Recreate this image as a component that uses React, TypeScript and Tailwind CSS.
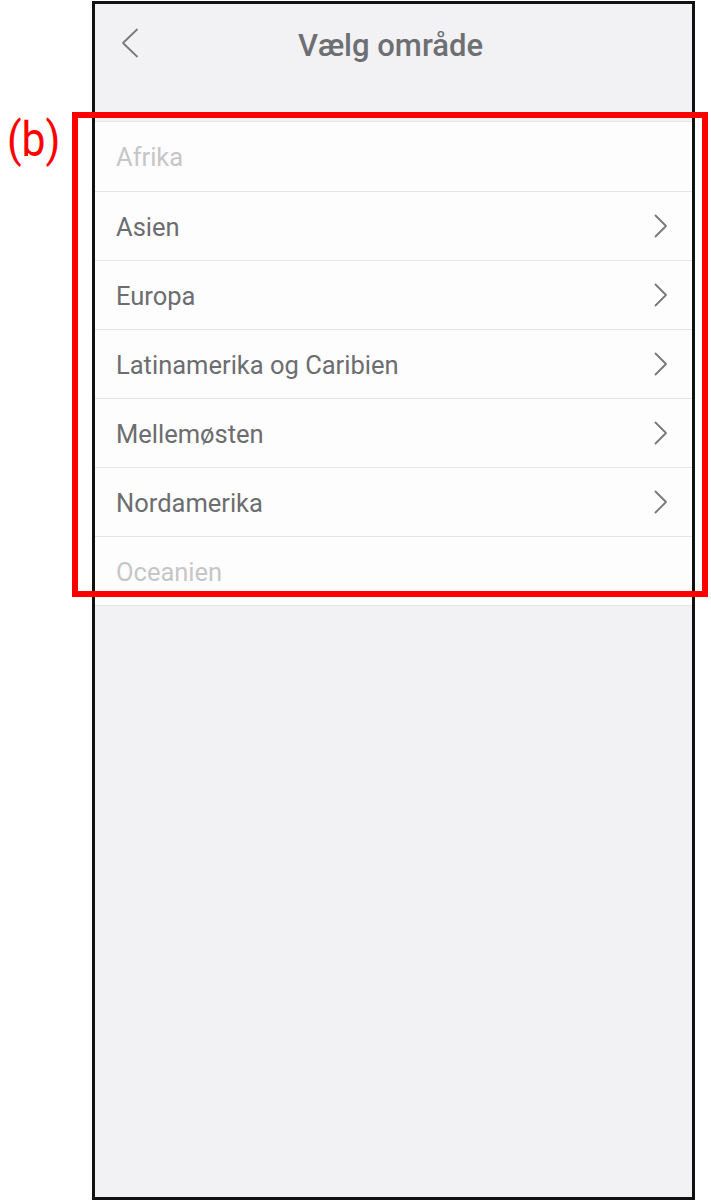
const REGIONS = [
  { name: "Afrika", enabled: false },
  { name: "Asien", enabled: true },
  { name: "Europa", enabled: true },
  { name: "Latinamerika og Caribien", enabled: true },
  { name: "Mellemøsten", enabled: true },
  { name: "Nordamerika", enabled: true },
  { name: "Oceanien", enabled: false },
];

const ChevronRight = () => (
  <svg width="14" height="24" viewBox="0 0 14 24" fill="none" className="shrink-0">
    <path d="M1.5 1.5 L12 12 L1.5 22.5" stroke="#77787b" strokeWidth="1.8" strokeLinecap="round" strokeLinejoin="round" />
  </svg>
);

const ChevronLeft = () => (
  <svg width="18" height="30" viewBox="0 0 18 30" fill="none">
    <path d="M16 1.5 L2 15 L16 28.5" stroke="#77787b" strokeWidth="1.8" strokeLinecap="round" strokeLinejoin="round" />
  </svg>
);

export default function App() {
  return (
    <div className="relative min-h-[1202px] w-[711px] bg-white font-['Roboto',sans-serif]">
      <div className="ml-[92px] pt-[1px]">
        <div className="flex h-[1199px] w-[603px] flex-col border-[3px] border-[#111] bg-[#f2f2f4]">
          <header className="relative flex h-[84px] shrink-0 items-center justify-center">
            <div className="absolute left-[26px] top-[24px]">
              <ChevronLeft />
            </div>
            <h1 className="-ml-[6px] text-[31px] font-medium text-[#6e6f72]">Vælg område</h1>
          </header>

          <ul className="mt-[33px] border-y border-[#e6e6e8] bg-[#fdfdfd]">
            {REGIONS.map((r, i) => (
              <li
                key={r.name}
                className={
                  "flex h-[69px] items-center justify-between pl-[21px] pr-[24px] " +
                  (i > 0 ? "border-t border-[#e4e4e6]" : "")
                }
              >
                <span className={"pt-[2px] text-[25.5px] " + (r.enabled ? "text-[#6c6d70]" : "text-[#c6c6c8]")}>
                  {r.name}
                </span>
                {r.enabled && <ChevronRight />}
              </li>
            ))}
          </ul>
        </div>
      </div>

      {/* annotation overlay */}
      <div className="pointer-events-none absolute left-[72px] top-[112px] h-[485px] w-[636px] border-[6px] border-[#ff0000]" />
      <span className="absolute left-[7px] top-[116px] origin-left scale-x-[0.89] font-['Roboto',sans-serif] text-[48px] leading-none text-[#ff0000]">
        (b)
      </span>
    </div>
  );
}
